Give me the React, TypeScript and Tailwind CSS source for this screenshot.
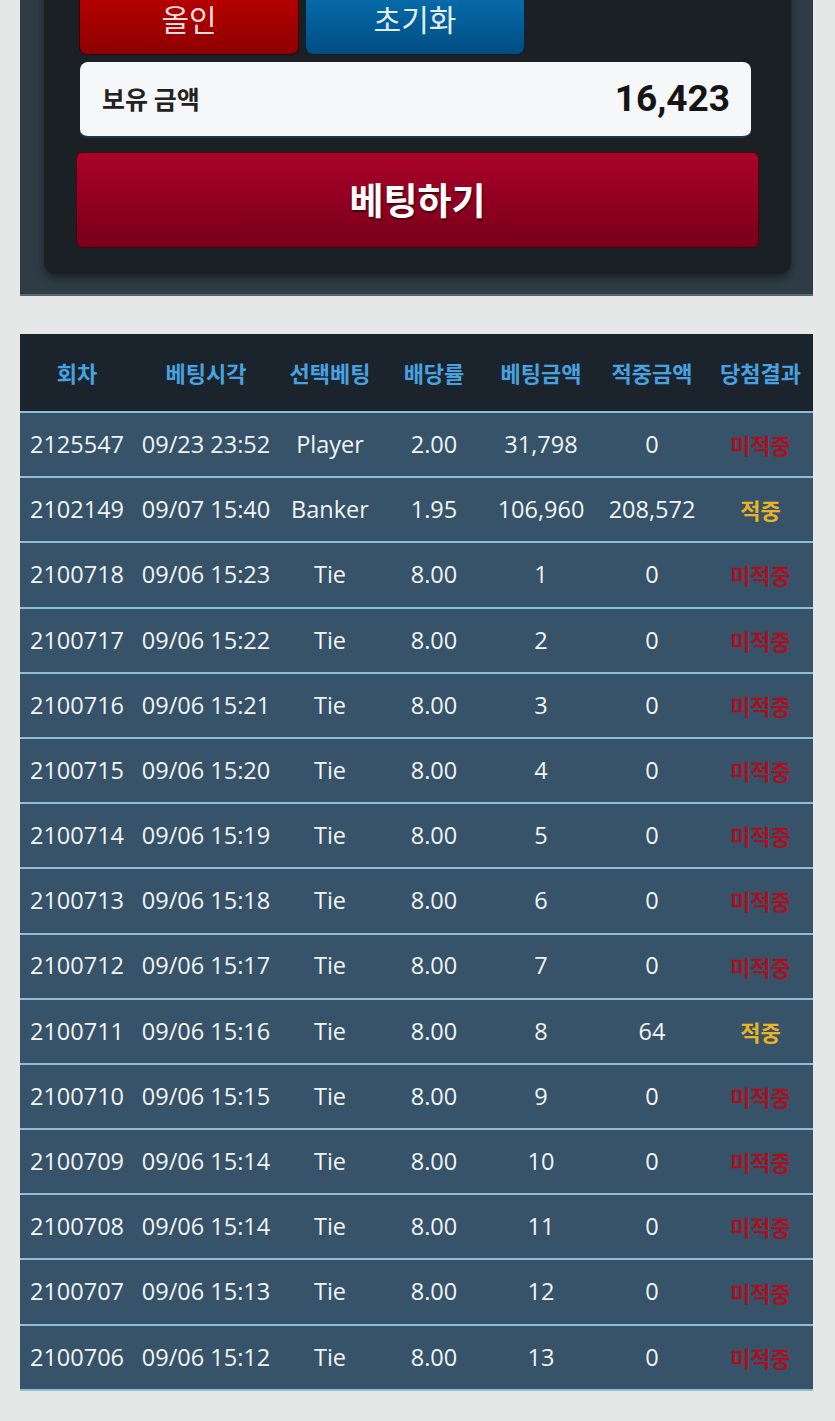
const rows = [
  ['2125547', '09/23 23:52', 'Player', '2.00', '31,798', '0', false],
  ['2102149', '09/07 15:40', 'Banker', '1.95', '106,960', '208,572', true],
  ['2100718', '09/06 15:23', 'Tie', '8.00', '1', '0', false],
  ['2100717', '09/06 15:22', 'Tie', '8.00', '2', '0', false],
  ['2100716', '09/06 15:21', 'Tie', '8.00', '3', '0', false],
  ['2100715', '09/06 15:20', 'Tie', '8.00', '4', '0', false],
  ['2100714', '09/06 15:19', 'Tie', '8.00', '5', '0', false],
  ['2100713', '09/06 15:18', 'Tie', '8.00', '6', '0', false],
  ['2100712', '09/06 15:17', 'Tie', '8.00', '7', '0', false],
  ['2100711', '09/06 15:16', 'Tie', '8.00', '8', '64', true],
  ['2100710', '09/06 15:15', 'Tie', '8.00', '9', '0', false],
  ['2100709', '09/06 15:14', 'Tie', '8.00', '10', '0', false],
  ['2100708', '09/06 15:14', 'Tie', '8.00', '11', '0', false],
  ['2100707', '09/06 15:13', 'Tie', '8.00', '12', '0', false],
  ['2100706', '09/06 15:12', 'Tie', '8.00', '13', '0', false],
] as const;

const headers = ['회차', '베팅시각', '선택베팅', '배당률', '베팅금액', '적중금액', '당첨결과'];

const grid = 'grid grid-cols-[114px_144px_104px_104px_110px_112px_105px] items-center text-center';

export default function App() {
  return (
    <div className="min-h-screen bg-[#e6e7e7] overflow-hidden font-['Open_Sans','Noto_Sans_CJK_KR',sans-serif]">
      {/* bet panel */}
      <div className="ml-[20px] w-[793px] bg-[#2f3c45] border-b-2 border-[#56666f] pl-[24px] pr-[22px] pb-[20px]">
        <div className="bg-[#1b2025] rounded-b-xl shadow-[0_4px_8px_rgba(0,0,0,0.45)] px-[32px] pb-[26px]">
          <div className="-mt-[19px] ml-[3px] flex gap-[6px]">
            <button className="w-[220px] h-[74px] rounded-lg border border-[#3a0000] bg-gradient-to-b from-[#c00000] to-[#8e0000] text-[30px] leading-none text-[#f7dcdc] font-['Noto_Sans_CJK_KR',sans-serif]">
              올인
            </button>
            <button className="w-[220px] h-[74px] rounded-lg border border-[#00223a] bg-gradient-to-b from-[#0b74b6] to-[#004d82] text-[30px] leading-none text-[#e3eef7] font-['Noto_Sans_CJK_KR',sans-serif]">
              초기화
            </button>
          </div>
          <div className="mt-[7px] ml-[4px] mr-[8px] h-[76px] rounded-lg bg-[#f6f7f8] border-b-2 border-[#1d3550] flex items-center justify-between pl-[22px] pr-[21px]">
            <span className="text-[25px] font-bold text-[#222] font-['Noto_Sans_CJK_KR',sans-serif]">보유 금액</span>
            <span className="text-[37px] font-bold text-[#151515] font-['Roboto',sans-serif]">16,423</span>
          </div>
          <button className="mt-[14px] w-full h-[96px] rounded-md border border-[#4d000f] bg-gradient-to-b from-[#ab0229] to-[#78001a] text-[37px] font-bold text-white font-['Noto_Sans_CJK_KR',sans-serif] [text-shadow:1px_2px_2px_rgba(0,0,0,0.5)]">
            베팅하기
          </button>
        </div>
      </div>

      {/* history table */}
      <div className="mt-[38px] ml-[20px] w-[793px]">
        <div className={`${grid} h-[77px] bg-[#1b242c] text-[22px] font-bold text-[#48a2e0] font-['Noto_Sans_CJK_KR',sans-serif]`}>
          {headers.map((h) => (
            <div key={h} className="whitespace-nowrap">{h}</div>
          ))}
        </div>
        {rows.map((r, i) => (
          <div
            key={r[0] + i}
            className={`${grid} bg-[#365369] border-t-2 border-[#8fbdd8] text-[23.5px] text-[#f2f4f5] ${i === rows.length - 1 ? 'border-b-2 h-[67px]' : 'h-[65.2px]'}`}
          >
            <div>{r[0]}</div>
            <div className="whitespace-nowrap">{r[1]}</div>
            <div>{r[2]}</div>
            <div>{r[3]}</div>
            <div>{r[4]}</div>
            <div>{r[5]}</div>
            <div
              className={`text-[22px] font-bold font-['Noto_Sans_CJK_KR',sans-serif] ${r[6] ? 'text-[#e8b325]' : 'text-[#aa1020]'}`}
            >
              {r[6] ? '적중' : '미적중'}
            </div>
          </div>
        ))}
      </div>
    </div>
  );
}
